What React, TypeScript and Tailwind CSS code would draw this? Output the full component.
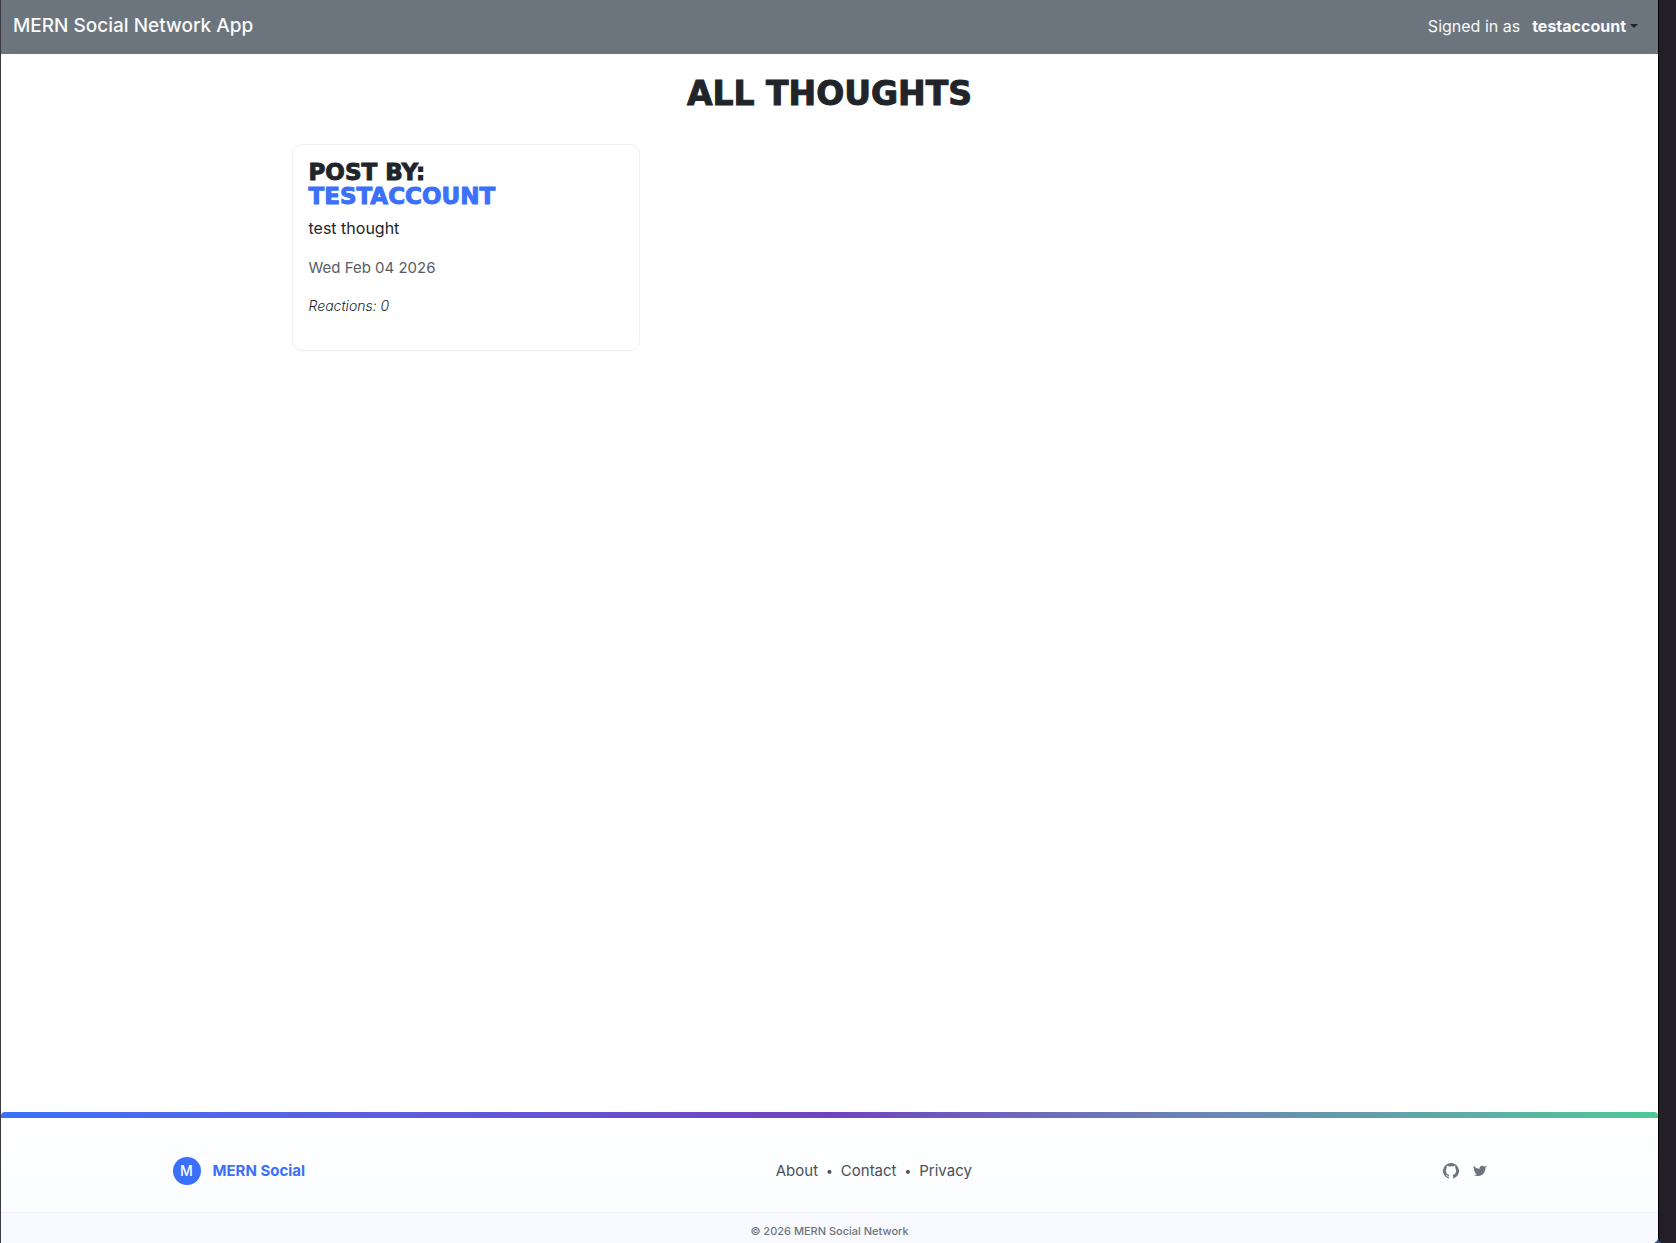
interface Thought {
  id: number;
  username: string;
  text: string;
  createdAt: string;
  reactionCount: number;
}

const thoughts: Thought[] = [
  {
    id: 1,
    username: "testaccount",
    text: "test thought",
    createdAt: "Wed Feb 04 2026",
    reactionCount: 0,
  },
];

function GithubIcon() {
  return (
    <svg viewBox="0 0 16 16" className="size-4" fill="currentColor">
      <path d="M8 0A8 8 0 0 0 5.8 15.7V13.6c-1.9.4-2.5-.8-2.9-1.5l.8-.2c.7.9 1.1 1.2 2.2.9.1-.5.3-.8.5-1C4.2 11.5 2.9 10.2 2.9 7.4c0-1 .3-1.8.9-2.5-.1-.5-.2-1.3.1-2.2 0 0 .9-.2 2.3.9a7 7 0 0 1 3.6 0c1.4-1.1 2.3-.9 2.3-.9.3.9.2 1.7.1 2.2.6.7.9 1.5.9 2.5 0 2.8-1.3 4.1-3.5 4.4.4.4.6 1 .6 1.9v2A8 8 0 0 0 8 0z" />
    </svg>
  );
}

function TwitterIcon() {
  return (
    <svg viewBox="0 0 14 14" className="size-3.5" fill="currentColor">
      <path d="M.8 1.8C2.2 3.6 4.1 4.7 6.6 4.8 6.4 3.1 7.6 1.8 9.2 1.8c.8 0 1.4.3 1.9.7l2.7-.4c-.3.7-.8 1.2-1.4 1.6.1 4-2.6 8.3-7.2 8.3-1.5 0-3.1-.3-4.2-1 1.2 0 2.2-.3 3-1C2.7 9.8 1.8 9 1.5 8h1C1.3 7.4.7 6.4.8 5.2l.8.2C.5 4.3.3 3 .8 1.8z" />
    </svg>
  );
}

function Navbar({ username }: { username: string }) {
  return (
    <nav className="flex h-[54px] items-center justify-between bg-[#6c757d] pb-0.5 pl-3 pr-5 text-[#f8f9fa]">
      <a href="#home" className="text-[19px] font-medium">
        MERN Social Network App
      </a>
      <div className="flex items-center gap-3">
        <span>Signed in as</span>
        <button type="button" className="flex items-center gap-1 font-bold">
          {username}
          <span className="border-x-4 border-t-4 border-x-transparent border-t-[#212529]" />
        </button>
      </div>
    </nav>
  );
}

function ThoughtCard({ thought }: { thought: Thought }) {
  return (
    <article className="h-[207px] rounded-[10px] border border-[#eeeff0] bg-white px-4 py-[15px]">
      <h2 className="mb-2 font-['DejaVu_Sans',sans-serif] text-[23px] leading-6 font-bold uppercase [-webkit-text-stroke:1px]">
        <span className="block">Post by:</span>
        <a href="#profile" className="block text-[#3b71fa]">
          {thought.username}
        </a>
      </h2>
      <p className="mb-4">{thought.text}</p>
      <p className="mb-4 text-[15px] leading-6 text-[#595c5f]">
        {thought.createdAt}
      </p>
      <p className="text-sm font-light italic">
        Reactions: {thought.reactionCount}
      </p>
    </article>
  );
}

function Footer() {
  return (
    <footer className="mt-auto overflow-hidden rounded-t-sm bg-linear-to-b from-white to-[#fafcff]">
      <div className="h-1.5 bg-linear-to-r from-[#3b71fa] via-[#6f42c1] to-[#4ec896]" />
      <div className="mx-auto flex h-[94px] max-w-[1314px] items-center justify-between pt-3">
        <a
          href="#home"
          className="flex items-center gap-3 font-bold text-[#3b71fa]"
        >
          <span className="flex size-7 items-center justify-center rounded-full bg-[#3b71fa] text-sm font-medium text-white">
            M
          </span>
          <span className="text-[15px]">MERN Social</span>
        </a>
        <div className="flex items-center gap-2 text-[15px] text-[#495057]">
          <a href="#about">About</a>
          <span className="text-xs">•</span>
          <a href="#contact">Contact</a>
          <span className="text-xs">•</span>
          <a href="#privacy">Privacy</a>
        </div>
        <div className="flex items-center gap-3.5 text-[#6c757d]">
          <a href="#github" aria-label="GitHub">
            <GithubIcon />
          </a>
          <a href="#twitter" aria-label="Twitter">
            <TwitterIcon />
          </a>
        </div>
      </div>
      <p className="h-[31px] border-t border-[#edf3fc] bg-[#f8faff] pt-2.5 text-center text-[11px] leading-4 font-medium text-[#6c757d]">
        © 2026 MERN Social Network
      </p>
    </footer>
  );
}

export default function App() {
  return (
    <div className="flex min-h-screen bg-[#3f4f7c] font-['Inter',sans-serif] text-base text-[#212529]">
      <div className="w-px bg-[#3c3942]" />
      <div className="flex grow flex-col overflow-hidden rounded-br-md bg-white">
        <Navbar username="testaccount" />
        <main className="mx-auto w-full max-w-[1100px] px-3 pt-[21px]">
          <h1 className="mb-[31px] text-center font-['DejaVu_Sans',sans-serif] text-[33px] leading-[38px] font-bold uppercase [-webkit-text-stroke:1px]">
            All Thoughts
          </h1>
          <div className="grid grid-cols-3 gap-4">
            {thoughts.map((thought) => (
              <ThoughtCard key={thought.id} thought={thought} />
            ))}
          </div>
        </main>
        <Footer />
      </div>
      <div className="w-[18px] rounded-bl-md border-l border-black bg-[#222026]" />
    </div>
  );
}
